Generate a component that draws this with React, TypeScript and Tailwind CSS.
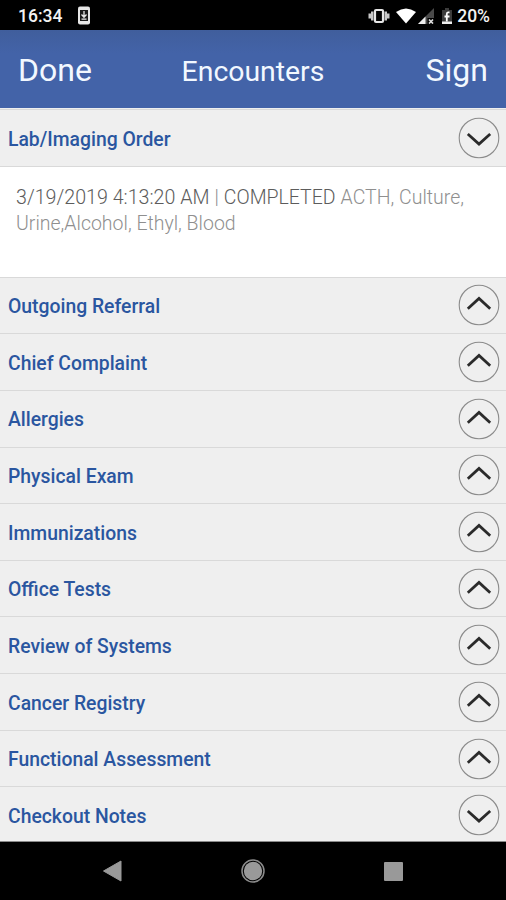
interface Section {
  title: string
  open?: boolean
}

const SECTIONS: Section[] = [
  { title: 'Outgoing Referral' },
  { title: 'Chief Complaint' },
  { title: 'Allergies' },
  { title: 'Physical Exam' },
  { title: 'Immunizations' },
  { title: 'Office Tests' },
  { title: 'Review of Systems' },
  { title: 'Cancer Registry' },
  { title: 'Functional Assessment' },
  { title: 'Checkout Notes', open: true },
]

function Toggle({ open }: { open?: boolean }) {
  return (
    <button aria-label={open ? 'Collapse' : 'Expand'} className="size-[42px] shrink-0">
      <svg viewBox="0 0 42 42" className="size-full" fill="none">
        <circle cx="21" cy="21" r="19.8" stroke="#8c8c8c" strokeWidth="1.1" />
        <path
          d={open ? 'M9.8 17L21 27L32.2 17' : 'M9.8 24.7L21 14.5L32.2 24.7'}
          stroke="#2b2b2b"
          strokeWidth="2.8"
        />
      </svg>
    </button>
  )
}

function SectionRow({ title, open }: Section) {
  return (
    <div className="flex h-[56.67px] shrink-0 items-center justify-between border-t border-[#d9d9d9] bg-[#efefef] pr-1.5 pl-2">
      <h2 className="pt-[2.4px] text-[19.35px] leading-[29px] font-medium text-[#2a56a0]">{title}</h2>
      <Toggle open={open} />
    </div>
  )
}

function StatusBar() {
  return (
    <div className="flex h-[30px] shrink-0 items-center bg-black pt-0.5 pr-4 pl-[18px] text-[17.5px] leading-none font-medium text-[#f2f2f2]">
      <span className="pt-px">16:34</span>
      <svg viewBox="0 0 14 20" className="ml-[15px] h-5 w-3.5">
        <rect x="1" y="0.5" width="12" height="18" rx="2" fill="#e6e6e6" />
        <rect x="3" y="4" width="8" height="11" fill="#1a1a1a" />
        <path d="M7 5v6M4.5 8.5L7 11.2L9.5 8.5M4.5 13.2h5" stroke="#e6e6e6" strokeWidth="1.3" fill="none" />
      </svg>
      <div className="ml-auto flex items-center">
        {/* vibrate */}
        <svg viewBox="0 0 22 16" className="h-4 w-[22px]" fill="#c8c8c8">
          <path d="M0.5 5.5h2.5v5h-2.5zM3 3.5h2.5v9H3zM16.5 3.5H19v9h-2.5zM19 5.5h2.5v5H19z" />
          <rect x="7" y="2" width="8" height="12" rx="1" fill="none" stroke="#e6e6e6" strokeWidth="2.2" />
        </svg>
        {/* wifi */}
        <svg viewBox="0 0 20 16" className="ml-[6px] h-4 w-5">
          <path d="M0 4Q10 -3 20 4L10 15.5z" fill="#fff" />
        </svg>
        {/* mobile signal */}
        <svg viewBox="0 0 16 16" className="ml-0.5 h-4 w-4">
          <path d="M16 0v16H0z" fill="#4a4a4a" />
          <path d="M7.5 8.5V16H0z" fill="#eee" />
          <path d="M9.5 10H16v6H9.5z" fill="#000" />
          <path d="M11 11.5l4 4M15 11.5l-4 4" stroke="#ddd" strokeWidth="1.7" />
        </svg>
        {/* battery charging */}
        <svg viewBox="0 0 10 16" className="ml-2 h-4 w-2.5">
          <path d="M3 0h4v2h3v14H0V2h3z" fill="#3c3c3c" />
          <path d="M0 13.5h10V16H0z" fill="#eee" />
          <path d="M7.5 4.3H6Q4.8 4.3 4.8 6v7.5M2.5 8.5h5" stroke="#fff" strokeWidth="1.8" fill="none" />
        </svg>
        <span className="ml-[5px] pt-px">20%</span>
      </div>
    </div>
  )
}

function Header() {
  return (
    <header className="grid h-[78px] shrink-0 grid-cols-[1fr_auto_1fr] items-center bg-linear-to-b from-[#405e9c] to-[#4363a8] to-30% px-[18px] pt-[2px] text-[#f2f8ff]">
      <button className="text-left text-[32px] leading-none">Done</button>
      <h1 className="pt-1 text-[28.4px] leading-none">Encounters</h1>
      <button className="text-right text-[32px] leading-none">Sign</button>
    </header>
  )
}

function NavBar() {
  return (
    <nav className="flex h-[58px] shrink-0 items-center justify-between bg-black pr-[103px] pl-[102px]">
      <svg viewBox="0 0 20 22" className="h-[22px] w-5">
        <path d="M1.5 11L19 1v20z" fill="#999" stroke="#999" strokeLinejoin="round" />
      </svg>
      <svg viewBox="0 0 24 24" className="size-6">
        <circle cx="12" cy="12" r="9.2" fill="#999" />
        <circle cx="12" cy="12" r="11" fill="none" stroke="#8c8c8c" strokeWidth="1.5" />
      </svg>
      <div className="size-[19px] rounded-[1px] bg-[#999]" />
    </nav>
  )
}

export default function App() {
  return (
    <div className="flex h-[900px] w-[506px] flex-col overflow-hidden bg-[#efefef] font-['Roboto',sans-serif]">
      <StatusBar />
      <Header />
      <main className="flex h-[734px] shrink-0 flex-col overflow-hidden border-b border-[#8a8a8a] pt-[1.3px]">
        <SectionRow title="Lab/Imaging Order" open />
        <div className="h-[110.6px] shrink-0 border-t border-[#d9d9d9] bg-white px-4 pt-[18px] text-[19.5px] leading-[26px] font-light text-[#8f8f8f]">
          <p className="flex gap-[5px] whitespace-nowrap">
            <span className="text-[19.65px] text-[#5c5c5c]">3/19/2019 4:13:20 AM</span>
            <span>|</span>
            <span className="text-[#5c5c5c]">COMPLETED</span>
            <span>ACTH, Culture,</span>
          </p>
          <p>Urine,Alcohol, Ethyl, Blood</p>
        </div>
        {SECTIONS.map((s) => (
          <SectionRow key={s.title} {...s} />
        ))}
      </main>
      <NavBar />
    </div>
  )
}
